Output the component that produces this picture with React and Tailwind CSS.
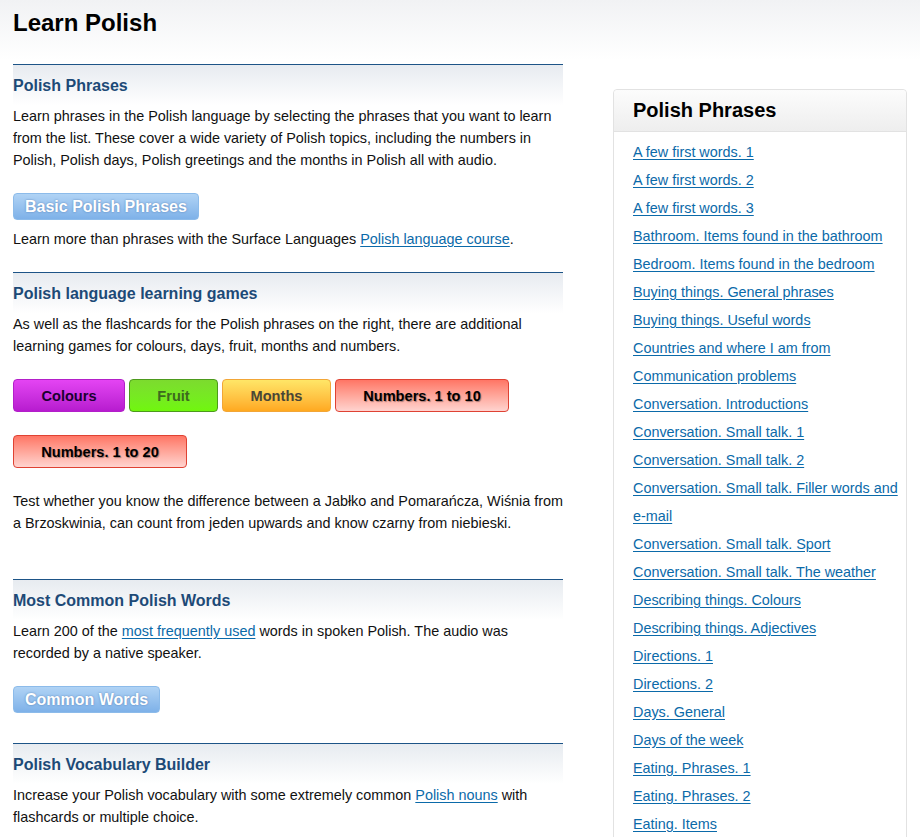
import React from "react";

const phrases = [
  "A few first words. 1",
  "A few first words. 2",
  "A few first words. 3",
  "Bathroom. Items found in the bathroom",
  "Bedroom. Items found in the bedroom",
  "Buying things. General phrases",
  "Buying things. Useful words",
  "Countries and where I am from",
  "Communication problems",
  "Conversation. Introductions",
  "Conversation. Small talk. 1",
  "Conversation. Small talk. 2",
  "Conversation. Small talk. Filler words and e-mail",
  "Conversation. Small talk. Sport",
  "Conversation. Small talk. The weather",
  "Describing things. Colours",
  "Describing things. Adjectives",
  "Directions. 1",
  "Directions. 2",
  "Days. General",
  "Days of the week",
  "Eating. Phrases. 1",
  "Eating. Phrases. 2",
  "Eating. Items",
  "Eating. Ordering",
  "Family",
];

function SectionHead({ children }) {
  return (
    <h2 className="border-t border-[#1d5487] bg-gradient-to-b from-[#e7ebf0] to-white pt-[11px] pb-[9px] text-[16px] leading-[20px] font-bold text-[#1d4a77]">
      {children}
    </h2>
  );
}

function Link({ children }) {
  return (
    <a href="#" className="text-[#0b6aa9] underline underline-offset-2">
      {children}
    </a>
  );
}

function BlueButton({ children }) {
  return (
    <button className="h-[27px] rounded-[4px] border border-[#8cbbea] bg-gradient-to-b from-[#b0d3f5] to-[#7eb1e8] px-[11px] text-[16px] leading-[24px] font-bold text-white [text-shadow:0_0_2px_rgba(40,80,140,0.6)]">
      {children}
    </button>
  );
}

function GameButton({ children, className }) {
  return (
    <button
      className={
        "h-[33px] rounded-[4px] border text-[14.6px] font-bold " + className
      }
    >
      {children}
    </button>
  );
}

const numbersCls =
  "w-[174px] border-[#df4233] bg-gradient-to-b from-[#ff7565] to-[#ffd3cf] text-black [text-shadow:1px_1px_1px_rgba(0,0,0,0.35)]";

export default function App() {
  return (
    <div
      className="min-h-screen bg-[linear-gradient(#f1f2f4,#ffffff_60px)] text-[14.4px] leading-[22px] text-[#111]"
      style={{ fontFamily: '"Liberation Sans", Arial, sans-serif' }}
    >
      <div className="flex pl-[13px]">
        <main className="w-[550px] shrink-0">
          <h1 className="pt-[9px] text-[24px] leading-[28px] font-bold text-black">
            Learn Polish
          </h1>

          <section className="mt-[27px]">
            <SectionHead>Polish Phrases</SectionHead>
            <p>
              Learn phrases in the Polish language by selecting the phrases
              that you want to learn from the list. These cover a wide variety
              of Polish topics, including the numbers in Polish, Polish days,
              Polish greetings and the months in Polish all with audio.
            </p>
            <div className="mt-[22px]">
              <BlueButton>Basic Polish Phrases</BlueButton>
            </div>
            <p className="mt-[8px]">
              Learn more than phrases with the Surface Languages{" "}
              <Link>Polish language course</Link>.
            </p>
          </section>

          <section className="mt-[22px]">
            <SectionHead>Polish language learning games</SectionHead>
            <p>
              As well as the flashcards for the Polish phrases on the right,
              there are additional learning games for colours, days, fruit,
              months and numbers.
            </p>
            <div className="mt-[22px] flex flex-wrap gap-x-[4px] gap-y-[23px]">
              <GameButton className="w-[112px] border-[#b31fc9] bg-gradient-to-b from-[#e444f3] to-[#b71bcf] text-[#1a0030]">
                Colours
              </GameButton>
              <GameButton className="w-[89px] border-[#4c9a1c] bg-gradient-to-b from-[#7cdb2e] to-[#70f70c] text-[#3d6a1e]">
                Fruit
              </GameButton>
              <GameButton className="w-[109px] border-[#f2a637] bg-gradient-to-b from-[#ffe667] to-[#ffa91f] text-[#4a4636]">
                Months
              </GameButton>
              <GameButton className={numbersCls}>Numbers. 1 to 10</GameButton>
              <GameButton className={numbersCls}>Numbers. 1 to 20</GameButton>
            </div>
            <p className="mt-[22px] mr-[-6px]">
              Test whether you know the difference between a Jabłko and
              Pomarańcza, Wiśnia from a Brzoskwinia, can count from jeden
              upwards and know czarny from niebieski.
            </p>
          </section>

          <section className="mt-[45px]">
            <SectionHead>Most Common Polish Words</SectionHead>
            <p>
              Learn 200 of the <Link>most frequently used</Link> words in
              spoken Polish. The audio was recorded by a native speaker.
            </p>
            <div className="mt-[22px]">
              <BlueButton>Common Words</BlueButton>
            </div>
          </section>

          <section className="mt-[30px]">
            <SectionHead>Polish Vocabulary Builder</SectionHead>
            <p>
              Increase your Polish vocabulary with some extremely common{" "}
              <Link>Polish nouns</Link> with flashcards or multiple choice.
            </p>
          </section>
        </main>

        <aside className="ml-[50px] mt-[89px] w-[294px] shrink-0 self-start rounded-t-[4px] border border-[#e2e2e2]">
          <div className="h-[42px] rounded-t-[4px] border-b border-[#e2e2e2] bg-gradient-to-b from-[#fcfcfc] to-[#eeeeee] pl-[19px] text-[20px] leading-[41px] font-bold text-black">
            Polish Phrases
          </div>
          <ul className="pt-[6px] pl-[19px] pr-[8px] leading-[28px]">
            {phrases.map((p) => (
              <li key={p}>
                <Link>{p}</Link>
              </li>
            ))}
          </ul>
        </aside>
      </div>
    </div>
  );
}
